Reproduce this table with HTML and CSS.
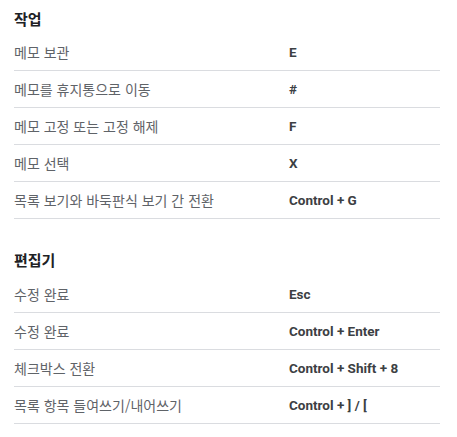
FILE: index.html
```html
<!DOCTYPE html>
<html lang="ko">
<head>
<meta charset="utf-8">
<link rel="stylesheet" href="styles.css">
</head>
<body>
<div class="page">
  <section class="group">
    <h2 class="group-title">작업</h2>
    <div class="row"><span class="label">메모 보관</span><span class="key">E</span></div>
    <div class="row"><span class="label">메모를 휴지통으로 이동</span><span class="key">#</span></div>
    <div class="row"><span class="label">메모 고정 또는 고정 해제</span><span class="key">F</span></div>
    <div class="row"><span class="label">메모 선택</span><span class="key">X</span></div>
    <div class="row"><span class="label">목록 보기와 바둑판식 보기 간 전환</span><span class="key">Control + G</span></div>
  </section>
  <section class="group">
    <h2 class="group-title">편집기</h2>
    <div class="row"><span class="label">수정 완료</span><span class="key">Esc</span></div>
    <div class="row"><span class="label">수정 완료</span><span class="key">Control + Enter</span></div>
    <div class="row"><span class="label">체크박스 전환</span><span class="key">Control + Shift + 8</span></div>
    <div class="row"><span class="label">목록 항목 들여쓰기/내어쓰기</span><span class="key">Control + ] / [</span></div>
  </section>
</div>
</body>
</html>
```
FILE: styles.css
```css
* { box-sizing: border-box; }
html, body { margin: 0; padding: 0; background: #ffffff; }
.page {
  padding: 0 17px 0 14px;
  font-family: "Noto Sans CJK KR", "Noto Sans", sans-serif;
}
.group { display: flex; flex-direction: column; }
.group + .group { margin-top: 23px; }
.group-title {
  margin: 0;
  height: 34px;
  display: flex;
  align-items: center;
  font-size: 15px;
  font-weight: 700;
  color: #202124;
}
.group:first-child .group-title { padding-top: 2px; }
.row {
  display: grid;
  grid-template-columns: 275px 1fr;
  align-items: center;
  height: 37px;
  border-bottom: 1px solid #dadce0;
}
.label {
  font-size: 14px;
  color: #5f6368;
}
.key {
  font-family: Roboto, "Liberation Sans", sans-serif;
  font-size: 13.5px;
  font-weight: 700;
  color: #3c4043;
}
```
